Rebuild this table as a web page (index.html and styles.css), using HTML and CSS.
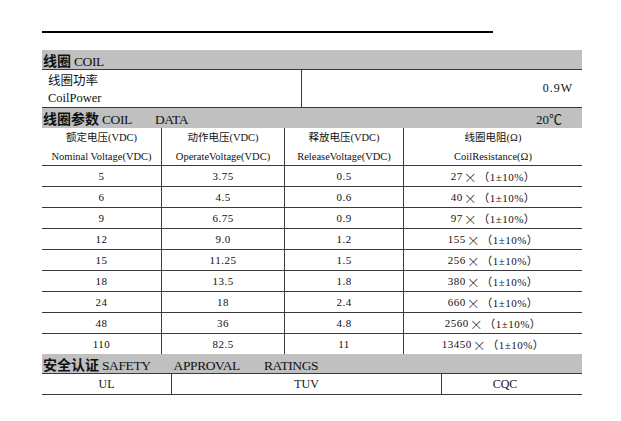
FILE: index.html
```html
<!DOCTYPE html>
<html lang="zh-CN">
<head>
<meta charset="utf-8">
<title>线圈参数</title>
<link rel="stylesheet" href="styles.css">
</head>
<body>
<div class="page">
  <div class="rule"></div>
  <div class="sheet">
    <div class="band band-first"><span><span class="zh-b">线圈</span> COIL</span></div>
    <div class="power">
      <div class="power-label">
        <div class="zh">线圈功率</div>
        <div>CoilPower</div>
      </div>
      <div class="power-value">0.9W</div>
    </div>
    <div class="band band-split">
      <span><span class="zh-b">线圈参数</span> COIL<span class="gap"></span>DATA</span>
      <span class="temp">20℃</span>
    </div>
    <div class="grid">
      <div class="cell head"><div><span class="zh">额定电压</span>(VDC)</div><div>Nominal Voltage(VDC)</div></div>
      <div class="cell head"><div><span class="zh">动作电压</span>(VDC)</div><div>OperateVoltage(VDC)</div></div>
      <div class="cell head"><div><span class="zh">释放电压</span>(VDC)</div><div>ReleaseVoltage(VDC)</div></div>
      <div class="cell head last"><div><span class="zh">线圈电阻</span>(Ω)</div><div>CoilResistance(Ω)</div></div>

      <div class="cell">5</div><div class="cell">3.75</div><div class="cell">0.5</div><div class="cell last">27<span class="x">×</span>（1±10%）</div>
      <div class="cell">6</div><div class="cell">4.5</div><div class="cell">0.6</div><div class="cell last">40<span class="x">×</span>（1±10%）</div>
      <div class="cell">9</div><div class="cell">6.75</div><div class="cell">0.9</div><div class="cell last">97<span class="x">×</span>（1±10%）</div>
      <div class="cell">12</div><div class="cell">9.0</div><div class="cell">1.2</div><div class="cell last">155<span class="x">×</span>（1±10%）</div>
      <div class="cell">15</div><div class="cell">11.25</div><div class="cell">1.5</div><div class="cell last">256<span class="x">×</span>（1±10%）</div>
      <div class="cell">18</div><div class="cell">13.5</div><div class="cell">1.8</div><div class="cell last">380<span class="x">×</span>（1±10%）</div>
      <div class="cell">24</div><div class="cell">18</div><div class="cell">2.4</div><div class="cell last">660<span class="x">×</span>（1±10%）</div>
      <div class="cell">48</div><div class="cell">36</div><div class="cell">4.8</div><div class="cell last">2560<span class="x">×</span>（1±10%）</div>
      <div class="cell end">110</div><div class="cell end">82.5</div><div class="cell end">11</div><div class="cell last end">13450<span class="x">×</span>（1±10%）</div>
    </div>
    <div class="band"><span><span class="zh-b">安全认证</span> SAFETY<span class="gap"></span>APPROVAL<span class="gap gap-wide"></span>RATINGS</span></div>
    <div class="cert">
      <div class="cert-cell c1">UL</div>
      <div class="cert-cell c2">TUV</div>
      <div class="cert-cell c3">CQC</div>
    </div>
  </div>
</div>
</body>
</html>
```
FILE: styles.css
```css
* { box-sizing: border-box; }
html, body { margin: 0; padding: 0; background: #fff; }
body {
  font-family: "Liberation Serif", "Noto Sans CJK SC", serif;
  color: #111;
}
.page {
  padding: 31px 0 0 42px;
}
.rule {
  width: 451px;
  height: 2px;
  background: #000;
  margin-bottom: 17px;
}
.sheet {
  width: 540px;
}
.band {
  height: 20px;
  background: #c0c0c0;
  border-bottom: 1px solid #3a3a3a;
  display: flex;
  align-items: center;
  font-size: 13.5px;
  letter-spacing: -0.4px;
  padding-left: 1px;
  white-space: nowrap;
}
.band-split {
  justify-content: space-between;
  border-bottom: none;
  height: 20px;
}
.temp {
  padding-right: 20px;
  font-size: 13px;
  letter-spacing: 0;
}
.zh-b {
  font-family: "Noto Sans CJK SC", sans-serif;
  font-weight: 700;
  font-size: 14px;
  letter-spacing: 0;
}
.zh {
  font-family: "Noto Sans CJK SC", sans-serif;
}
.x {
  font-family: "Noto Sans CJK SC", sans-serif;
  font-size: 13px;
  font-weight: 300;
  margin: 0 1px;
}
.gap { display: inline-block; width: 23px; }
.gap-wide { width: 24px; }

.power {
  height: 38px;
  display: flex;
  border-bottom: 1px solid #3a3a3a;
}
.power-label {
  width: 260px;
  border-right: 1px solid #3a3a3a;
  padding: 1px 0 0 6px;
  font-size: 12.5px;
  display: flex;
  flex-direction: column;
  justify-content: center;
  gap: 2px;
  line-height: 17px;
}
.power-value {
  flex: 1;
  display: flex;
  align-items: center;
  justify-content: flex-end;
  padding-right: 9px;
  font-size: 12px;
  letter-spacing: 1px;
}

.grid {
  display: grid;
  grid-template-columns: 120px 123px 119px 178px;
}
.cell {
  height: 21px;
  border-right: 1px solid #3a3a3a;
  border-bottom: 1px solid #3a3a3a;
  display: flex;
  align-items: center;
  justify-content: center;
  font-size: 11px;
  letter-spacing: 0.5px;
}
.cell.last { border-right: none; }
.cell.end { border-bottom: none; height: 20px; }
.cell.head {
  height: 38px;
  flex-direction: column;
  font-size: 10.5px;
  letter-spacing: 0;
  line-height: 19px;
  padding-top: 0;
}

.cert {
  display: flex;
  height: 21px;
  border-bottom: 1px solid #3a3a3a;
  font-size: 12px;
}
.cert-cell {
  display: flex;
  align-items: center;
  justify-content: center;
}
.c1 { width: 130px; border-right: 1px solid #3a3a3a; }
.c2 { width: 270px; border-right: 1px solid #3a3a3a; }
.c3 { flex: 1; padding-right: 14px; }
```
